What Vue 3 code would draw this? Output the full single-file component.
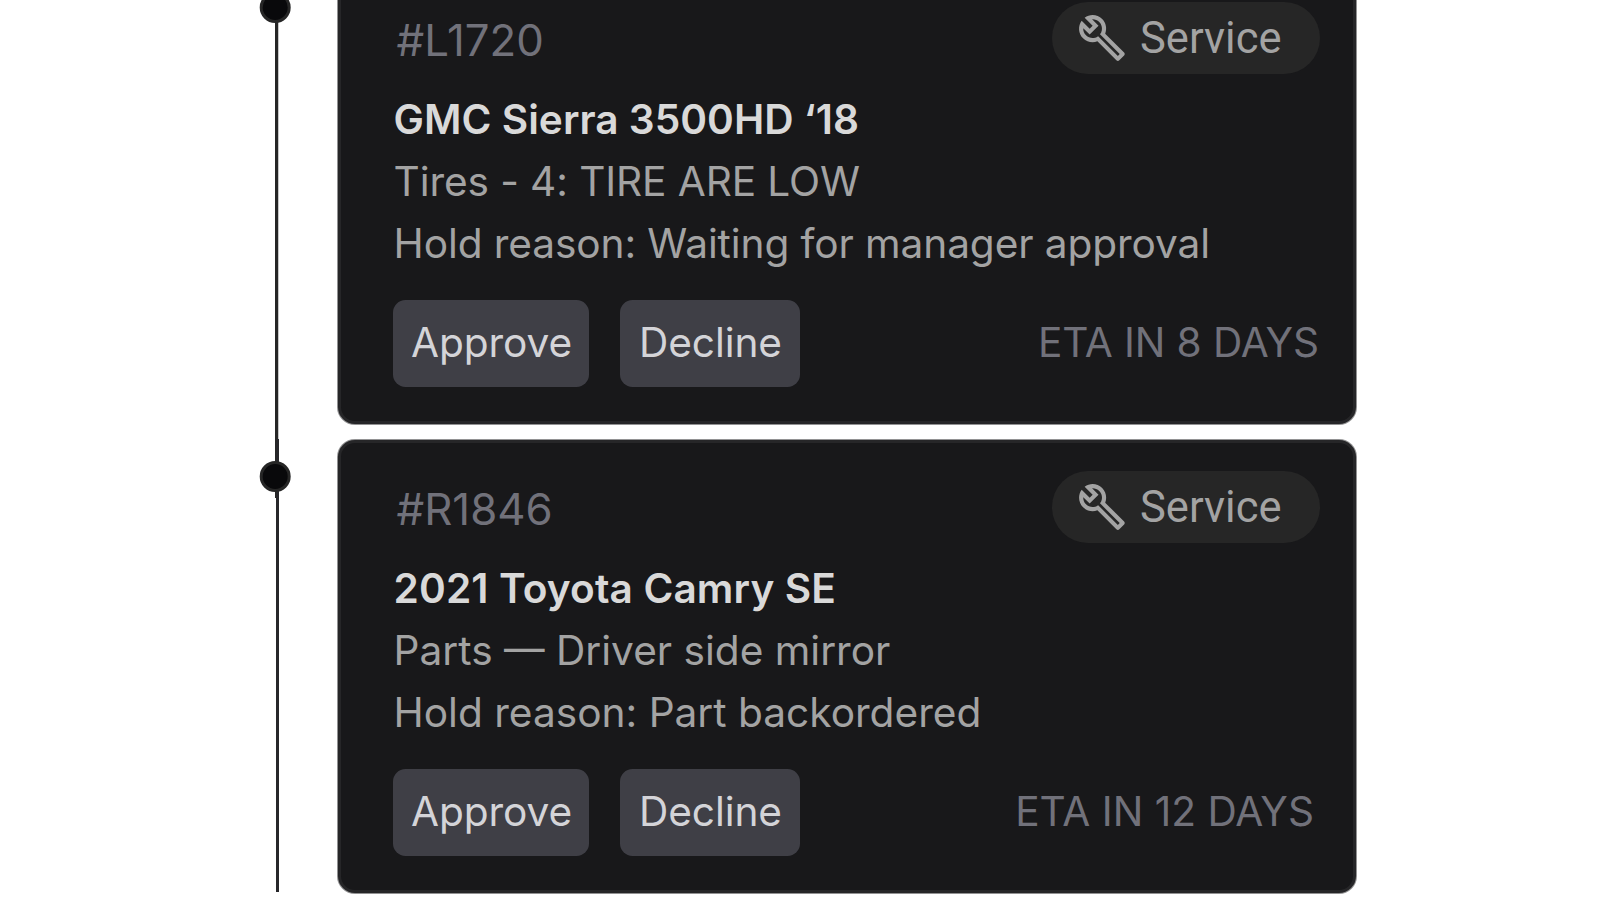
<template>
  <div class="hold-board">
    <div class="timeline-list">
      <div v-for="item in holds" :key="item.id" class="timeline-item">
        <div class="rail">
          <span class="rail-line"></span>
          <span class="rail-dot"></span>
        </div>

        <div class="hold-card">
          <div class="card-header">
            <span class="asset-id">#{{ item.id }}</span>
            <span class="type-badge">
              <svg class="badge-icon" viewBox="0 0 24 24" fill="currentColor">
                <path d="M22.61 18.99l-9.08-9.08c.93-2.34.45-5.1-1.44-7C9.79.61 6.21.4 3.66 2.26L7.5 6.11 6.08 7.52 2.25 3.69C.39 6.23.6 9.82 2.9 12.11c1.86 1.86 4.57 2.35 6.89 1.48l9.11 9.11c.39.39 1.02.39 1.41 0l2.3-2.3c.4-.38.4-1.01 0-1.41zm-3 1.6l-9.46-9.46c-.61.45-1.29.72-2 .82-1.36.2-2.79-.21-3.83-1.25C3.37 9.76 2.93 8.5 3 7.26l3.09 3.09 4.24-4.24-3.09-3.09c1.24-.07 2.49.37 3.44 1.31 1.08 1.08 1.49 2.57 1.24 3.96-.12.71-.42 1.37-.88 1.96l9.45 9.45-.88.89z" />
              </svg>
              <span class="badge-text">{{ item.type }}</span>
            </span>
          </div>

          <div class="card-body">
            <h3 class="vehicle">{{ item.vehicle }}</h3>
            <p class="detail">{{ item.detail }}</p>
            <p class="detail">Hold reason: {{ item.reason }}</p>
          </div>

          <div class="card-footer">
            <button class="btn btn-approve" @click="resolve(item, 'approved')">Approve</button>
            <button class="btn btn-decline" @click="resolve(item, 'declined')">Decline</button>
            <span class="eta" :class="{ wide: item.etaDays > 9 }">ETA IN {{ item.etaDays }} DAYS</span>
          </div>
        </div>
      </div>
    </div>
  </div>
</template>

<script setup>
import { ref } from 'vue';

const holds = ref([
  {
    id: 'L1720',
    type: 'Service',
    vehicle: 'GMC Sierra 3500HD ‘18',
    detail: 'Tires - 4: TIRE ARE LOW',
    reason: 'Waiting for manager approval',
    etaDays: 8,
    status: 'pending'
  },
  {
    id: 'R1846',
    type: 'Service',
    vehicle: '2021 Toyota Camry SE',
    detail: 'Parts — Driver side mirror',
    reason: 'Part backordered',
    etaDays: 12,
    status: 'pending'
  }
]);

const resolve = (item, status) => {
  item.status = status;
};
</script>

<style>
body { margin: 0; background: #ffffff; }
</style>

<style scoped>
.hold-board { height: 900px; overflow: hidden; background: #ffffff; font-family: 'Inter', sans-serif; }

/* the list is scrolled a little past its first card's top edge */
.timeline-list { display: flex; flex-direction: column; gap: 16px; margin-top: -29px; padding-left: 259px; }
.timeline-item { display: flex; height: 453px; }

/* =========================================
   TIMELINE RAIL
   ========================================= */
.rail { position: relative; flex: none; width: 79px; }
.rail-line { position: absolute; left: 16px; top: 0; width: 3px; height: 527px; background: #262626; box-shadow: 0.5px 0 0 rgba(38, 38, 38, 0.5); }
.timeline-item:last-child .rail-line { left: 17px; top: -1px; width: 3px; height: 453px; background: #27272a; box-shadow: none; }
.rail-dot { position: absolute; left: 1px; top: 21px; width: 31px; height: 31px; box-sizing: border-box; border: 3px solid #262626; border-radius: 50%; background: #09090b; transform: translateX(-0.3px); z-index: 1; }

/* =========================================
   CARD
   ========================================= */
.hold-card { width: 1018px; box-sizing: border-box; padding: 28px 33px 0 52px; background: #18181a; border: 3px solid #262628; border-radius: 17px; box-shadow: 0 0 0 1px rgba(38, 38, 40, 0.5); }

.card-header { display: flex; justify-content: space-between; height: 72px; }
.asset-id { padding-left: 3.5px; font-size: 43.75px; line-height: 78px; color: #71717a; }

.type-badge { display: flex; align-items: center; width: 268px; height: 72px; box-sizing: border-box; padding-left: 25px; border-radius: 36px; background: #262626; color: #a3a3a3; }
.badge-icon { flex: none; width: 50px; height: 50px; }
.badge-text { margin-left: 13px; padding-top: 2px; font-family: 'Roboto', sans-serif; font-size: 43.5px; line-height: 72px; }

.card-body { margin-top: 14px; padding-left: 0.6px; }
.vehicle, .detail { margin: 0; font-size: 40.625px; line-height: 62.5px; white-space: nowrap; }
.vehicle { height: 62.5px; line-height: 64px; font-weight: 600; letter-spacing: 0.03px; color: #d9d9d9; }
.detail { font-weight: 400; color: #a3a3a3; }
.timeline-item:first-child .detail { letter-spacing: -0.1px; }
.timeline-item:last-child .vehicle { letter-spacing: 0.12px; }

.card-footer { display: flex; align-items: flex-start; margin-top: 24px; }
.btn { height: 87px; padding: 0 0 1px 1px; border: none; border-radius: 12.5px; background: #3f3f46; color: #d4d4d8; font-family: inherit; font-size: 40.625px; letter-spacing: -0.1px; cursor: pointer; }
.btn-approve { width: 196px; }
.btn-decline { width: 180px; margin-left: 31px; }
.eta { margin-left: auto; padding-right: 1px; font-size: 40.625px; line-height: 85px; letter-spacing: -0.12px; color: #71717a; white-space: nowrap; }
.eta.wide { padding-right: 6px; letter-spacing: 0; }
</style>
